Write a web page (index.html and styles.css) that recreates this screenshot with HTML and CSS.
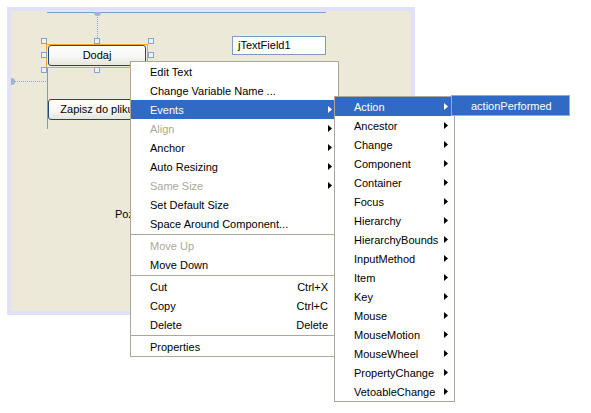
FILE: index.html
```html
<!DOCTYPE html>
<html>
<head>
<meta charset="utf-8">
<link rel="stylesheet" href="styles.css">
</head>
<body>
<div class="frame">
  <div class="guide guide-top"></div>
  <div class="guide guide-left"></div>
  <div class="dots dots-v"></div>
  <div class="dots dots-h"></div>
  <div class="anchor anchor-top"></div>
  <div class="anchor anchor-left"></div>
  <div class="selection"></div>
  <div class="btn btn-dodaj">Dodaj</div>
  <div class="btn btn-zapisz">Zapisz do pliku</div>
  <div class="field">jTextField1</div>
  <div class="label">Pozycja</div>
  <div class="handle h1"></div><div class="handle h2"></div><div class="handle h3"></div>
  <div class="handle h4"></div><div class="handle h6"></div>
  <div class="handle h7"></div><div class="handle h8"></div><div class="handle h9"></div>
</div>

<div class="menu menu-main">
  <div class="item">Edit Text</div>
  <div class="item">Change Variable Name ...</div>
  <div class="item active">Events<svg class="arr" width="4" height="7" viewBox="0 0 4 7"><polygon points="0,0 4,3.5 0,7"/></svg></div>
  <div class="item disabled">Align<svg class="arr" width="4" height="7" viewBox="0 0 4 7"><polygon points="0,0 4,3.5 0,7"/></svg></div>
  <div class="item">Anchor<svg class="arr" width="4" height="7" viewBox="0 0 4 7"><polygon points="0,0 4,3.5 0,7"/></svg></div>
  <div class="item">Auto Resizing<svg class="arr" width="4" height="7" viewBox="0 0 4 7"><polygon points="0,0 4,3.5 0,7"/></svg></div>
  <div class="item disabled">Same Size<svg class="arr" width="4" height="7" viewBox="0 0 4 7"><polygon points="0,0 4,3.5 0,7"/></svg></div>
  <div class="item">Set Default Size</div>
  <div class="item">Space Around Component...</div>
  <div class="sep"></div>
  <div class="item disabled">Move Up</div>
  <div class="item">Move Down</div>
  <div class="sep"></div>
  <div class="item">Cut<span class="key">Ctrl+X</span></div>
  <div class="item">Copy<span class="key">Ctrl+C</span></div>
  <div class="item">Delete<span class="key">Delete</span></div>
  <div class="sep"></div>
  <div class="item">Properties</div>
</div>

<div class="menu menu-events">
  <div class="item active">Action<svg class="arr" width="4" height="7" viewBox="0 0 4 7"><polygon points="0,0 4,3.5 0,7"/></svg></div>
  <div class="item">Ancestor<svg class="arr" width="4" height="7" viewBox="0 0 4 7"><polygon points="0,0 4,3.5 0,7"/></svg></div>
  <div class="item">Change<svg class="arr" width="4" height="7" viewBox="0 0 4 7"><polygon points="0,0 4,3.5 0,7"/></svg></div>
  <div class="item">Component<svg class="arr" width="4" height="7" viewBox="0 0 4 7"><polygon points="0,0 4,3.5 0,7"/></svg></div>
  <div class="item">Container<svg class="arr" width="4" height="7" viewBox="0 0 4 7"><polygon points="0,0 4,3.5 0,7"/></svg></div>
  <div class="item">Focus<svg class="arr" width="4" height="7" viewBox="0 0 4 7"><polygon points="0,0 4,3.5 0,7"/></svg></div>
  <div class="item">Hierarchy<svg class="arr" width="4" height="7" viewBox="0 0 4 7"><polygon points="0,0 4,3.5 0,7"/></svg></div>
  <div class="item">HierarchyBounds<svg class="arr" width="4" height="7" viewBox="0 0 4 7"><polygon points="0,0 4,3.5 0,7"/></svg></div>
  <div class="item">InputMethod<svg class="arr" width="4" height="7" viewBox="0 0 4 7"><polygon points="0,0 4,3.5 0,7"/></svg></div>
  <div class="item">Item<svg class="arr" width="4" height="7" viewBox="0 0 4 7"><polygon points="0,0 4,3.5 0,7"/></svg></div>
  <div class="item">Key<svg class="arr" width="4" height="7" viewBox="0 0 4 7"><polygon points="0,0 4,3.5 0,7"/></svg></div>
  <div class="item">Mouse<svg class="arr" width="4" height="7" viewBox="0 0 4 7"><polygon points="0,0 4,3.5 0,7"/></svg></div>
  <div class="item">MouseMotion<svg class="arr" width="4" height="7" viewBox="0 0 4 7"><polygon points="0,0 4,3.5 0,7"/></svg></div>
  <div class="item">MouseWheel<svg class="arr" width="4" height="7" viewBox="0 0 4 7"><polygon points="0,0 4,3.5 0,7"/></svg></div>
  <div class="item">PropertyChange<svg class="arr" width="4" height="7" viewBox="0 0 4 7"><polygon points="0,0 4,3.5 0,7"/></svg></div>
  <div class="item">VetoableChange<svg class="arr" width="4" height="7" viewBox="0 0 4 7"><polygon points="0,0 4,3.5 0,7"/></svg></div>
</div>

<div class="menu menu-action">
  <div class="item active">actionPerformed</div>
</div>
</body>
</html>
```

FILE: styles.css
```css
html, body {
  margin: 0;
  padding: 0;
  background: #ffffff;
  font-family: "Liberation Sans", Arial, sans-serif;
  font-size: 11px;
  color: #000000;
}

.frame {
  position: relative;
  margin: 7px 0 0 7px;
  width: 400px;
  height: 300px;
  border: 4px solid #e0e0fa;
  background: #ece9d8;
}

/* design-canvas guides (free canvas positions) */
.guide { position: absolute; background: #7f9cc0; }
.guide-top { left: 36px; top: 1px; width: 279px; height: 1px; }
.guide-left { left: 36px; top: 56px; width: 1px; height: 62px; }

.dots { position: absolute; }
.dots-v { left: 86px; top: 4px; height: 27px; width: 0; border-left: 1px dotted #8aa4c8; }
.dots-h { left: 3px; top: 70px; width: 32px; height: 0; border-top: 1px dotted #8aa4c8; }

.anchor { position: absolute; background: #9fb4d2; }
.anchor-top { left: 83px; top: 1px; width: 7px; height: 4px; border-radius: 0 0 4px 4px; }
.anchor-left { left: 0px; top: 67px; width: 4px; height: 7px; border-radius: 0 4px 4px 0; }

.selection {
  position: absolute;
  left: 35px; top: 33px;
  width: 102px; height: 24px;
  box-sizing: border-box;
  border: 1px solid #f5a623;
}

.btn {
  position: absolute;
  box-sizing: border-box;
  height: 21px;
  width: 98px;
  border: 1px solid #1c4a78;
  border-radius: 3px;
  background: linear-gradient(#ffffff 0%, #f6f6f2 60%, #e6e5dc 100%);
  text-align: center;
  line-height: 19px;
  white-space: nowrap;
  overflow: hidden;
}
.btn-dodaj { left: 37px; top: 34px; }
.btn-zapisz { left: 37px; top: 88px; }

.field {
  position: absolute;
  left: 221px; top: 25px;
  width: 94px; height: 19px;
  box-sizing: border-box;
  border: 1px solid #7f9db9;
  background: #ffffff;
  padding-left: 5px;
  line-height: 17px;
}

.label {
  position: absolute;
  left: 104px; top: 197px;
  line-height: 13px;
}

.handle {
  position: absolute;
  width: 6px; height: 6px;
  box-sizing: border-box;
  border: 1px solid #8da3c4;
  background: #eef2f8;
}
.h1 { left: 30px; top: 27px; }
.h2 { left: 83px; top: 27px; }
.h3 { left: 137px; top: 27px; }
.h4 { left: 30px; top: 41px; }
.h6 { left: 137px; top: 41px; }
.h7 { left: 30px; top: 56px; }
.h8 { left: 83px; top: 56px; }
.h9 { left: 137px; top: 56px; }

/* popup menus (overlay) */
.menu {
  position: absolute;
  background: #ffffff;
  border: 1px solid #aca899;
}
.menu-main { left: 130px; top: 61px; width: 207px; }
.menu-events { left: 334px; top: 96px; width: 119px; }
.menu-action { left: 451px; top: 95px; width: 117px; }

.item {
  box-sizing: border-box;
  height: 19px;
  line-height: 17px;
  padding: 2px 6px 0 19px;
  display: flex;
  align-items: center;
  justify-content: space-between;
  white-space: nowrap;
}
.item.active { background: #316ac5; color: #ffffff; }
.item.disabled { color: #aca899; }

.arr { fill: #000000; flex: none; margin-top: -2px; }
.item.active .arr { fill: #ffffff; }
.item.disabled .arr { fill: #000000; }

.key { margin-right: 4px; }

.sep {
  height: 1px;
  margin: 1px 0;
  background: #aca899;
}
```
